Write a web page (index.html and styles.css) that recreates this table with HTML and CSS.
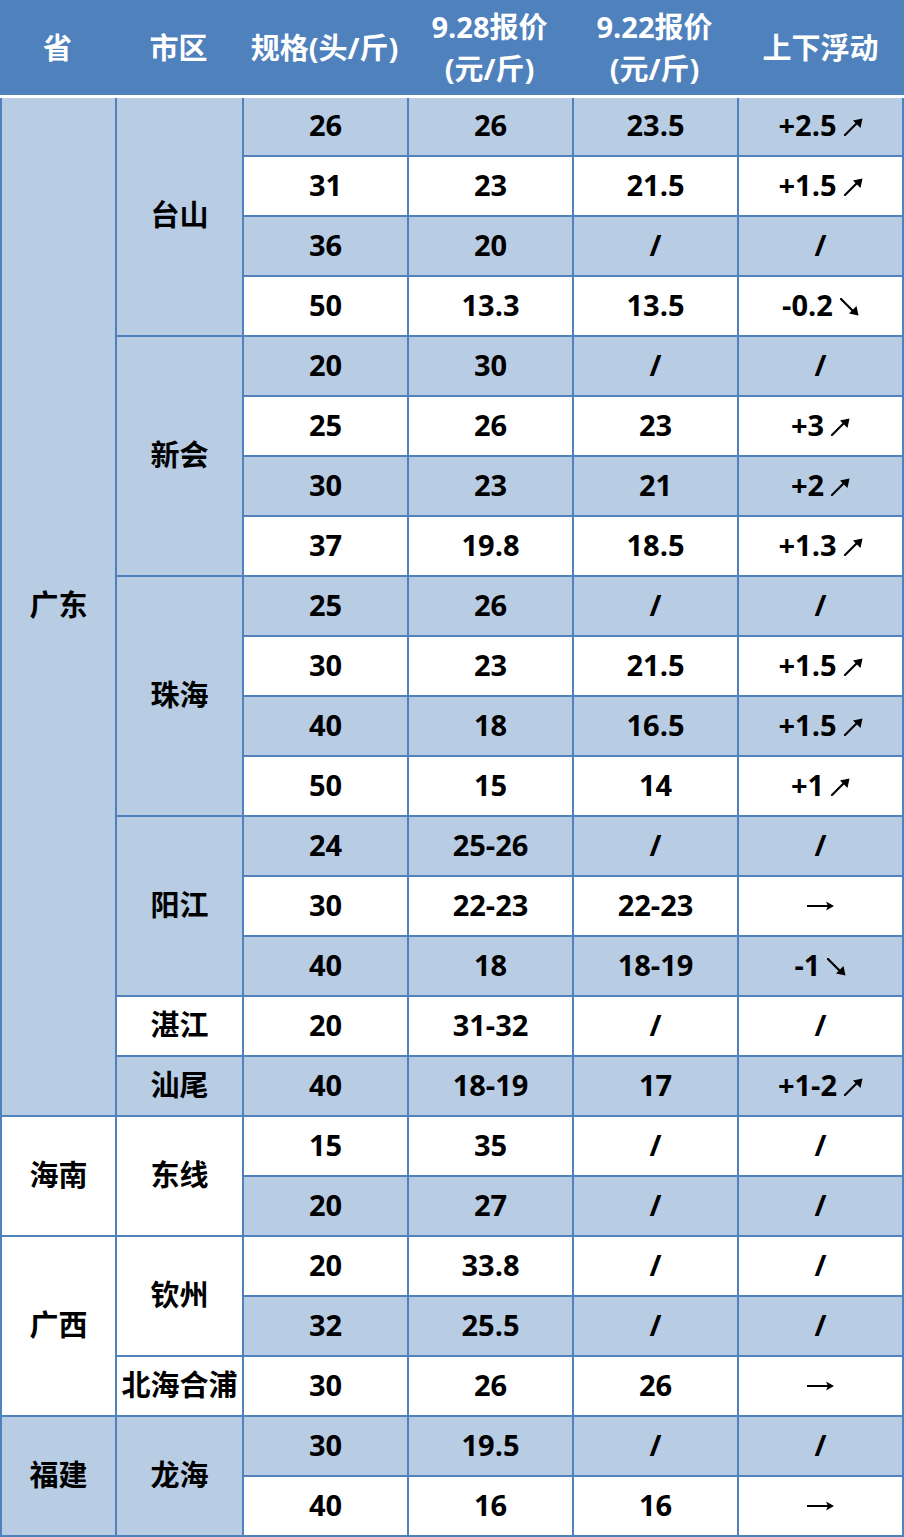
FILE: index.html
```html
<!DOCTYPE html>
<html lang="zh">
<head>
<meta charset="utf-8">
<title>价格表</title>
<link rel="stylesheet" href="styles.css">
</head>
<body>
<svg width="0" height="0" class="defs" aria-hidden="true">
  <defs>
    <g id="up">
      <path d="M2 17 L15 4" stroke="#000" stroke-width="2.2" stroke-linecap="round"/>
      <polygon points="19.5,0.5 10,2.5 17.5,10" fill="#000"/>
    </g>
    <g id="down">
      <path d="M2 1 L15 14" stroke="#000" stroke-width="2.2" stroke-linecap="round"/>
      <polygon points="19.5,17.5 10,15.5 17.5,8" fill="#000"/>
    </g>
    <g id="right">
      <path d="M0 6 L22 6" stroke="#000" stroke-width="2"/>
      <polygon points="27,6 19,1.5 21,6 19,10.5" fill="#000"/>
    </g>
  </defs>
</svg>
<div class="table">
  <div class="head">
    <div class="h">省</div>
    <div class="h">市区</div>
    <div class="h">规格(头/斤)</div>
    <div class="h two">9.28报价<br>(元/斤)</div>
    <div class="h two">9.22报价<br>(元/斤)</div>
    <div class="h">上下浮动</div>
  </div>
  <div class="body">
    <div class="c l s17">广东</div>
    <div class="c l s4">台山</div>
    <div class="c l">26</div><div class="c l">26</div><div class="c l">23.5</div><div class="c l"><span class="v">+2.5<svg class="ic" width="20" height="18" viewBox="0 0 20 18"><use href="#up"/></svg></span></div>
    <div class="c w">31</div><div class="c w">23</div><div class="c w">21.5</div><div class="c w"><span class="v">+1.5<svg class="ic" width="20" height="18" viewBox="0 0 20 18"><use href="#up"/></svg></span></div>
    <div class="c l">36</div><div class="c l">20</div><div class="c l">/</div><div class="c l">/</div>
    <div class="c w">50</div><div class="c w">13.3</div><div class="c w">13.5</div><div class="c w"><span class="v">-0.2<svg class="ic" width="20" height="18" viewBox="0 0 20 18"><use href="#down"/></svg></span></div>

    <div class="c l s4">新会</div>
    <div class="c l">20</div><div class="c l">30</div><div class="c l">/</div><div class="c l">/</div>
    <div class="c w">25</div><div class="c w">26</div><div class="c w">23</div><div class="c w"><span class="v">+3<svg class="ic" width="20" height="18" viewBox="0 0 20 18"><use href="#up"/></svg></span></div>
    <div class="c l">30</div><div class="c l">23</div><div class="c l">21</div><div class="c l"><span class="v">+2<svg class="ic" width="20" height="18" viewBox="0 0 20 18"><use href="#up"/></svg></span></div>
    <div class="c w">37</div><div class="c w">19.8</div><div class="c w">18.5</div><div class="c w"><span class="v">+1.3<svg class="ic" width="20" height="18" viewBox="0 0 20 18"><use href="#up"/></svg></span></div>

    <div class="c l s4">珠海</div>
    <div class="c l">25</div><div class="c l">26</div><div class="c l">/</div><div class="c l">/</div>
    <div class="c w">30</div><div class="c w">23</div><div class="c w">21.5</div><div class="c w"><span class="v">+1.5<svg class="ic" width="20" height="18" viewBox="0 0 20 18"><use href="#up"/></svg></span></div>
    <div class="c l">40</div><div class="c l">18</div><div class="c l">16.5</div><div class="c l"><span class="v">+1.5<svg class="ic" width="20" height="18" viewBox="0 0 20 18"><use href="#up"/></svg></span></div>
    <div class="c w">50</div><div class="c w">15</div><div class="c w">14</div><div class="c w"><span class="v">+1<svg class="ic" width="20" height="18" viewBox="0 0 20 18"><use href="#up"/></svg></span></div>

    <div class="c l s3">阳江</div>
    <div class="c l">24</div><div class="c l">25-26</div><div class="c l">/</div><div class="c l">/</div>
    <div class="c w">30</div><div class="c w">22-23</div><div class="c w">22-23</div><div class="c w"><svg class="rt" width="27" height="12" viewBox="0 0 27 12"><use href="#right"/></svg></div>
    <div class="c l">40</div><div class="c l">18</div><div class="c l">18-19</div><div class="c l"><span class="v">-1<svg class="ic" width="20" height="18" viewBox="0 0 20 18"><use href="#down"/></svg></span></div>

    <div class="c w">湛江</div>
    <div class="c w">20</div><div class="c w">31-32</div><div class="c w">/</div><div class="c w">/</div>

    <div class="c l">汕尾</div>
    <div class="c l">40</div><div class="c l">18-19</div><div class="c l">17</div><div class="c l"><span class="v">+1-2<svg class="ic" width="20" height="18" viewBox="0 0 20 18"><use href="#up"/></svg></span></div>

    <div class="c w s2">海南</div>
    <div class="c w s2">东线</div>
    <div class="c w">15</div><div class="c w">35</div><div class="c w">/</div><div class="c w">/</div>
    <div class="c l">20</div><div class="c l">27</div><div class="c l">/</div><div class="c l">/</div>

    <div class="c w s3">广西</div>
    <div class="c w s2">钦州</div>
    <div class="c w">20</div><div class="c w">33.8</div><div class="c w">/</div><div class="c w">/</div>
    <div class="c l">32</div><div class="c l">25.5</div><div class="c l">/</div><div class="c l">/</div>
    <div class="c w">北海合浦</div>
    <div class="c w">30</div><div class="c w">26</div><div class="c w">26</div><div class="c w"><svg class="rt" width="27" height="12" viewBox="0 0 27 12"><use href="#right"/></svg></div>

    <div class="c l s2">福建</div>
    <div class="c l s2">龙海</div>
    <div class="c l">30</div><div class="c l">19.5</div><div class="c l">/</div><div class="c l">/</div>
    <div class="c w">40</div><div class="c w">16</div><div class="c w">16</div><div class="c w"><svg class="rt" width="27" height="12" viewBox="0 0 27 12"><use href="#right"/></svg></div>
  </div>
</div>
</body>
</html>
```

FILE: styles.css
```css
html, body {
  margin: 0;
  padding: 0;
  background: #ffffff;
}

.defs {
  position: absolute;
  width: 0;
  height: 0;
  overflow: hidden;
}

.table {
  width: 904px;
  font-family: "Open Sans", "Noto Sans CJK SC", sans-serif;
  font-weight: 700;
  font-size: 29px;
  color: #000000;
}

.head {
  display: grid;
  grid-template-columns: 115px 127px 165px 165px 165px 167px;
  height: 95px;
  background: #4f81bd;
  border-bottom: 3px solid #ffffff;
  color: #ffffff;
}

.h {
  display: flex;
  align-items: center;
  justify-content: center;
  text-align: center;
  line-height: 42px;
  padding-top: 1px;
}

.body {
  display: grid;
  grid-template-columns: 113px 125px 163px 163px 163px 163px;
  grid-template-rows: 57px repeat(23, 58px);
  gap: 2px;
  padding: 0 2px 2px 2px;
  background: #4f81bd;
}

.c {
  display: flex;
  align-items: center;
  justify-content: center;
  white-space: nowrap;
  line-height: 1;
  padding-bottom: 4px;
}

.l { background: #b8cce4; }
.w { background: #ffffff; }

.s2 { grid-row: span 2; }
.s3 { grid-row: span 3; }
.s4 { grid-row: span 4; }
.s17 { grid-row: span 17; }

.v {
  display: inline-block;
}

.ic {
  display: inline-block;
  vertical-align: baseline;
  margin-left: 6px;
}

.rt {
  display: block;
  margin-top: 4px;
}
```
